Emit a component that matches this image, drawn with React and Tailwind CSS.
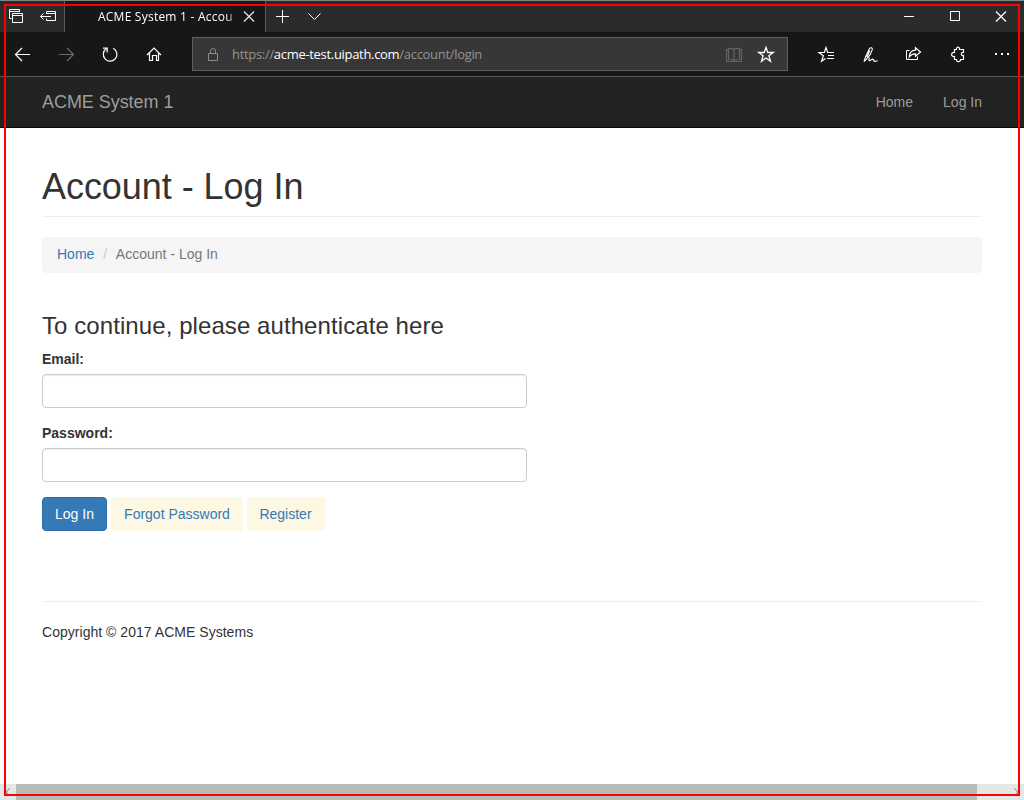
import React from "react";

function Glyph({ box, className = "", children }) {
  const [, , w, h] = box.split(" ");
  return (
    <svg viewBox={box} width={w} height={h} fill="none" stroke="currentColor" strokeWidth="1" className={"block shrink-0 " + className}>
      {children}
    </svg>
  );
}

function TabStrip() {
  return (
    <div className="flex h-8 border-t border-[#7a8a8c] bg-[#2b2b2b] text-white">
      <Glyph box="0 1 32 31">
        <path d="M11.5 18.5H9.5V9.5H19.5V12M9.5 11.5H19.5" />
        <path d="M12.5 13.5H22.5V22.5H12.5ZM12.5 15.5H22.5" />
      </Glyph>
      <Glyph box="32 1 32 31">
        <path d="M46.5 14V11.5H55.5V20.5H46.5V18.5M46.5 13.5H55.5M40.5 16.5H51M43.5 13.5L40.5 16.5L43.5 19.5" />
      </Glyph>
      <div className="flex w-[202px] items-center border-x border-[#5a5a5a] bg-[#171717] pl-[33px]">
        <div className="w-[136px] shrink-0 whitespace-nowrap font-['Open_Sans',sans-serif] text-[12px] leading-5 tracking-[0.23px] [mask-image:linear-gradient(to_right,black_94%,#0006)]">
          ACME System 1 - Accou
        </div>
        <Glyph box="234 1 31 31" className="text-[#e8e8e8]">
          <path d="M244 11.5L254 21.5M254 11.5L244 21.5" strokeWidth="1.2" />
        </Glyph>
      </div>
      <Glyph box="266 1 32 31">
        <path d="M276 16.5H289M282.5 10V23" />
      </Glyph>
      <Glyph box="298 1 32 31">
        <path d="M308.5 13.5L314.5 19.5L320.5 13.5" />
      </Glyph>
      <div className="flex-1" />
      <Glyph box="886 1 46 31">
        <path d="M904 16.5H914" />
      </Glyph>
      <Glyph box="932 1 46 31">
        <path d="M950.5 11.5H959.5V20.5H950.5Z" />
      </Glyph>
      <Glyph box="978 1 46 31">
        <path d="M996 11.5L1006 21.5M1006 11.5L996 21.5" strokeWidth="1.2" />
      </Glyph>
    </div>
  );
}

function Toolbar() {
  return (
    <div className="flex h-[45px] items-start border-b border-[#5c5c5c] bg-[#171717] text-white">
      <Glyph box="0 32 44 44">
        <path d="M15.5 54.5H30M22 48L15.5 54.5L22 61" strokeWidth="1.2" />
      </Glyph>
      <Glyph box="44 32 44 44" className="text-[#6c6c6c]">
        <path d="M59 54.5H73.5M67 48L73.5 54.5L67 61" strokeWidth="1.2" />
      </Glyph>
      <Glyph box="88 32 44 44">
        <path d="M113.2 48.3A6.8 6.8 0 1 1 106.2 48.8M103 48.2H107.2V52.4" strokeWidth="1.2" />
      </Glyph>
      <Glyph box="132 32 44 44">
        <path d="M147 55L154 48L161 55M149.5 53V60.5H152.5V55.5H156.5V60.5H158.5V53" strokeWidth="1.2" />
      </Glyph>
      <div className="ml-4 mt-[5px] flex h-[34px] w-[596px] items-center border border-[#5f5f5f] bg-[#373737]">
        <Glyph box="193 38 39 32" className="text-[#8c8c8c]">
          <path d="M208.5 53.5H217.5V60.5H208.5ZM210.5 53.5V51.2A2.5 2.7 0 0 1 215.5 51.2V53.5" />
        </Glyph>
        <div className="flex-1 whitespace-nowrap font-['Open_Sans',sans-serif] text-[13px] leading-5 tracking-[-0.31px] text-[#939393]">
          https://<span className="text-white">acme-test.uipath.com</span>/account/login
        </div>
        <Glyph box="718 38 32 32" className="text-[#656565]">
          <path d="M734 49.5C732 48 730 48.5 728.5 48.5V59.5C731 59.5 733 59.5 734 60.5C735 59.5 737 59.5 739.5 59.5V48.5C738 48.5 736 48 734 49.5ZM734 49.5V60.5M728 49.5H726.5V61.5H741.5V49.5H740" strokeWidth="1.2" />
        </Glyph>
        <Glyph box="750 38 37 32">
          <path d="M766 47.5L767.8 52.5H773.3L768.9 55.8L770.5 61.3L766 58L761.5 61.3L763.1 55.8L758.7 52.5H764.2Z" strokeWidth="1.3" />
        </Glyph>
      </div>
      <div className="flex-1" />
      <Glyph box="804 32 44 44">
        <path d="M834 52.5H827.7L826 47.5L824.3 52.5H819L823.3 55.8L821.6 61.2L825.5 58.4M828 55.5H834M827 58.5H834" strokeWidth="1.2" />
      </Glyph>
      <Glyph box="848 32 44 44">
        <path d="M864 61.5L865.5 57L869.3 49C870.3 47.2 872.8 47.4 872.2 49.8C871.6 52.3 868.5 57.2 866.3 59.4L864 61.5M869.8 50.5L866.8 57.3" strokeWidth="1.1" />
        <path d="M869.5 57.5C868.9 59 868.6 60.6 869.7 60.6C870.9 60.6 871.6 58.9 872.8 59.2C873.9 59.5 873.3 61.4 875 61.4C876.2 61.4 876.8 60.8 877.6 60.8" strokeWidth="1.2" />
      </Glyph>
      <Glyph box="892 32 44 44">
        <path d="M909.5 50.5H906.5V59.5H917.5V56.5" />
        <path d="M915.5 47.8L920.5 52L915.5 56.2V53.8C912.5 53.6 910.8 54.6 909.3 57C909.5 53 911.5 50.3 915.5 50.2Z" strokeWidth="1.2" />
      </Glyph>
      <Glyph box="936 32 44 44">
        <path d="M954.5 49.5H956.5C955.9 46.4 960.1 46.4 959.5 49.5H963.5V52.5C960.6 52 960.6 56 963.5 55.5V59.5H960.5C961 62.4 956 62.4 956.5 59.5H954.5V56.5C950.6 57.2 950.6 51.8 954.5 52.5Z" strokeWidth="1.2" />
      </Glyph>
      <Glyph box="980 32 44 44">
        <path d="M995 54H997M1001 54H1003M1007 54H1009" strokeWidth="2" />
      </Glyph>
    </div>
  );
}

function Field({ label, type }) {
  return (
    <label className="mb-[15px] block w-[485px] font-bold leading-5">
      {label}
      <input
        type={type}
        className="mt-[5px] block h-[34px] w-full rounded border border-[#cccccc] bg-white px-3 font-normal shadow-[inset_0_1px_1px_rgba(0,0,0,0.075)] outline-none"
      />
    </label>
  );
}

export default function App() {
  return (
    <div className="relative flex h-[800px] w-[1024px] flex-col overflow-hidden bg-white font-['Liberation_Sans',Arial,sans-serif] text-sm text-[#333333]">
      <TabStrip />
      <Toolbar />
      <nav className="flex h-[51px] items-center justify-between border-b border-[#080808] bg-[#222222] px-[42px] text-[#9d9d9d]">
        <a className="text-lg leading-5 tracking-[-0.05px]">ACME System 1</a>
        <div className="flex gap-[30px] leading-5">
          <a>Home</a>
          <a>Log In</a>
        </div>
      </nav>
      <main className="flex-1 px-[42px]">
        <h1 className="mt-10 h-[49px] border-b border-[#eeeeee] text-[36px] leading-[37px] tracking-[-0.05px]">Account - Log In</h1>
        <div className="mt-5 flex h-9 items-center rounded bg-[#f5f5f5] px-[15px] pb-0.5 leading-5">
          <a className="text-[#337ab7]">Home</a>
          <span className="w-[21.5px] text-center text-[#cccccc]">/</span>
          <span className="text-[#777777]">Account - Log In</span>
        </div>
        <h3 className="mb-[10px] mt-10 text-2xl leading-[26px] tracking-[0.08px]">To continue, please authenticate here</h3>
        <Field label="Email:" type="email" />
        <Field label="Password:" type="password" />
        <div className="flex gap-1">
          <button className="h-[34px] w-[65px] rounded border border-[#2e6da4] bg-[#337ab7] text-white">Log In</button>
          <button className="h-[34px] w-[132px] rounded bg-[#fcf8e3] text-[#337ab7]">Forgot Password</button>
          <button className="h-[34px] w-[78px] rounded bg-[#fcf8e3] pr-px text-[#337ab7]">Register</button>
        </div>
        <footer className="mt-[70px] border-t border-[#eeeeee] pt-5 leading-5 tracking-[0.03px]">Copyright © 2017 ACME Systems</footer>
      </main>
      <div className="flex h-4 bg-[#e6e6e6] text-[#777777]">
        <Glyph box="0 784 16 16">
          <path d="M9.5 788.5L6 792L9.5 795.5" />
        </Glyph>
        <div className="w-[961px] bg-[#b9b9b9]" />
        <div className="flex-1" />
        <Glyph box="1008 784 16 16">
          <path d="M1014.5 788.5L1018 792L1014.5 795.5" />
        </Glyph>
      </div>
      <div className="pointer-events-none absolute inset-1 border-2 border-[#ff0000]" />
    </div>
  );
}
